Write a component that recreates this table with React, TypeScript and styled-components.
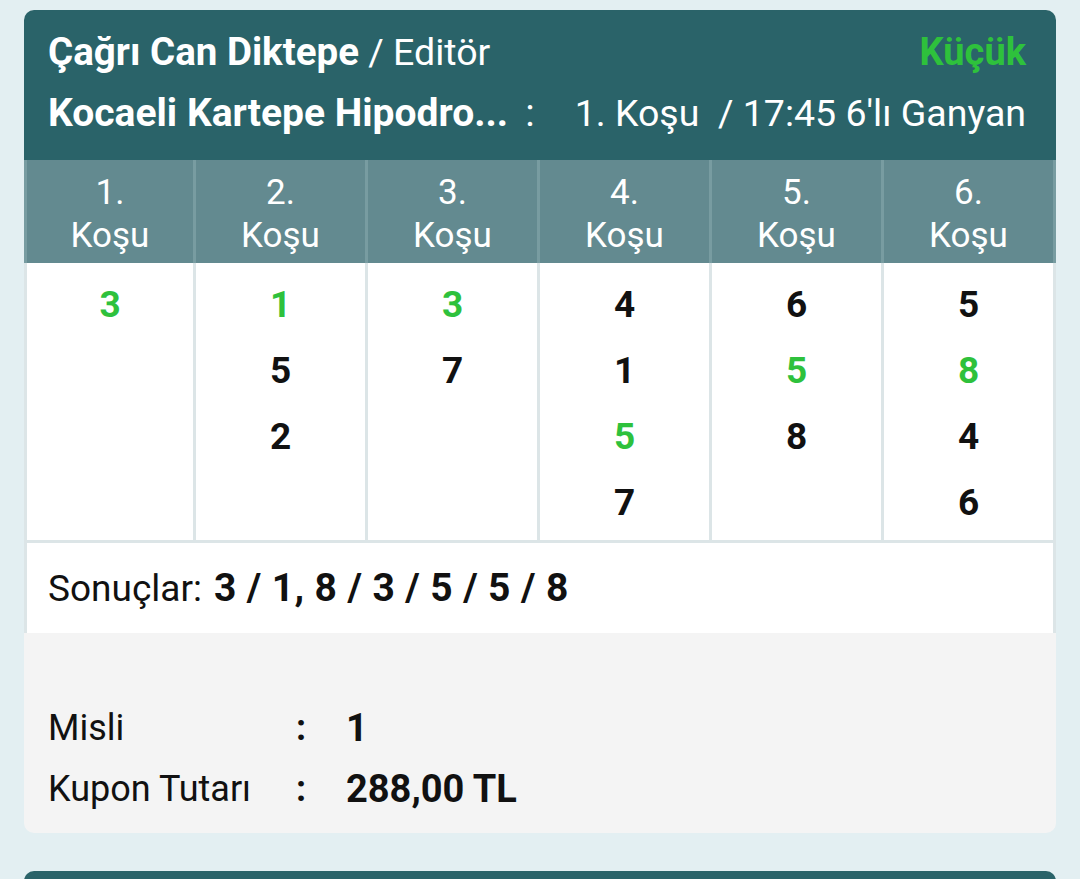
import React from "react";
import styled, { createGlobalStyle } from "styled-components";

const GlobalStyle = createGlobalStyle`
  html, body {
    margin: 0;
    padding: 0;
    background: #e3eff2;
    font-family: Roboto, "Noto Sans", Arial, sans-serif;
  }
  * { box-sizing: border-box; }
`;

const Page = styled.div`
  padding: 10px 24px 0 24px;
  display: flex;
  flex-direction: column;
  gap: 38px;
  height: 879px;
  overflow: hidden;
`;

const Card = styled.div`
  border-radius: 10px;
  overflow: hidden;
  background: #f4f4f4;
  flex-shrink: 0;
`;

const Header = styled.div`
  background: #2a6369;
  padding: 19px 30px 24px 24px;
  display: flex;
  flex-direction: column;
  gap: 15px;
  color: #fff;
`;

const HeaderRow = styled.div`
  display: flex;
  justify-content: space-between;
  align-items: center;
  font-size: 37.5px;
  line-height: 46px;
  white-space: nowrap;
`;

const Bold = styled.span`
  font-weight: 700;
  font-size: 38.5px;
`;

const Light = styled.span`
  font-weight: 400;
`;

const Tag = styled.span`
  color: #2ec13c;
  font-weight: 700;
  font-size: 38px;
`;

const Venue = styled.span`
  font-weight: 700;
  font-size: 39px;
  display: flex;
  gap: 17px;
`;

const Grid = styled.div`
  display: grid;
  grid-template-columns: repeat(6, 1fr);
  background: #fff;
`;

const Col = styled.div<{ $first?: boolean }>`
  display: flex;
  flex-direction: column;
  border-right: 3px solid #dce5e7;
  border-left: ${(p) => (p.$first ? "3px solid #dce5e7" : "none")};
`;

const ColHead = styled.div<{ $first?: boolean }>`
  background: #638a90;
  color: #fff;
  height: 103px;
  padding-top: 4px;
  display: flex;
  flex-direction: column;
  align-items: center;
  justify-content: center;
  font-size: 35px;
  line-height: 43px;
  margin-right: -3px;
  margin-left: ${(p) => (p.$first ? "-3px" : "0")};
  border-right: 3px solid #789ca1;
  border-left: ${(p) => (p.$first ? "3px solid #789ca1" : "none")};
`;

const ColBody = styled.div`
  padding: 8px 0 5px;
  height: 277px;
  display: flex;
  flex-direction: column;
`;

const Num = styled.div<{ $win?: boolean }>`
  height: 66px;
  display: flex;
  align-items: center;
  justify-content: center;
  font-size: 37px;
  font-weight: 700;
  color: ${(p) => (p.$win ? "#2ec13c" : "#111")};
`;

const Results = styled.div`
  background: #fff;
  border: 3px solid #dce5e7;
  border-bottom: none;
  height: 93px;
  padding: 0 21px;
  display: flex;
  align-items: center;
  font-size: 37px;
  color: #111;
  gap: 12px;
`;

const ResultVal = styled.span`
  font-weight: 700;
  font-size: 39px;
  letter-spacing: 0.4px;
`;

const Summary = styled.div`
  padding: 64px 24px 14px;
  display: grid;
  grid-template-columns: 246px 52px auto;
  grid-auto-rows: 61px;
  align-items: center;
  font-size: 36px;
  color: #111;
`;

const Label = styled.span`
  font-weight: 400;
`;

const Colon = styled.span`
  font-weight: 700;
  padding-left: 2px;
`;

const Value = styled.span`
  font-weight: 700;
  font-size: 38px;
`;

const NextCard = styled.div`
  height: 60px;
  background: #2a6369;
  border-radius: 10px 10px 0 0;
  flex-shrink: 0;
`;

type Pick = { n: number; win?: boolean };

const columns: Pick[][] = [
  [{ n: 3, win: true }],
  [{ n: 1, win: true }, { n: 5 }, { n: 2 }],
  [{ n: 3, win: true }, { n: 7 }],
  [{ n: 4 }, { n: 1 }, { n: 5, win: true }, { n: 7 }],
  [{ n: 6 }, { n: 5, win: true }, { n: 8 }],
  [{ n: 5 }, { n: 8, win: true }, { n: 4 }, { n: 6 }],
];

export default function App() {
  return (
    <>
      <GlobalStyle />
      <Page>
        <Card>
          <Header>
            <HeaderRow>
              <span>
                <Bold>Çağrı Can Diktepe</Bold> <Light>/ Editör</Light>
              </span>
              <Tag>Küçük</Tag>
            </HeaderRow>
            <HeaderRow>
              <Venue>
                <span>Kocaeli Kartepe Hipodro...</span>
                <Light>:</Light>
              </Venue>
              <Light>1. Koşu&nbsp;&nbsp;/ 17:45 6'lı Ganyan</Light>
            </HeaderRow>
          </Header>
          <Grid>
            {columns.map((picks, i) => (
              <Col key={i} $first={i === 0}>
                <ColHead $first={i === 0}>
                  <span>{i + 1}.</span>
                  <span>Koşu</span>
                </ColHead>
                <ColBody>
                  {picks.map((p, j) => (
                    <Num key={j} $win={p.win}>
                      {p.n}
                    </Num>
                  ))}
                </ColBody>
              </Col>
            ))}
          </Grid>
          <Results>
            <span>Sonuçlar:</span>
            <ResultVal>3 / 1, 8 / 3 / 5 / 5 / 8</ResultVal>
          </Results>
          <Summary>
            <Label>Misli</Label>
            <Colon>:</Colon>
            <Value>1</Value>
            <Label>Kupon Tutarı</Label>
            <Colon>:</Colon>
            <Value>288,00 TL</Value>
          </Summary>
        </Card>
        <NextCard />
      </Page>
    </>
  );
}
